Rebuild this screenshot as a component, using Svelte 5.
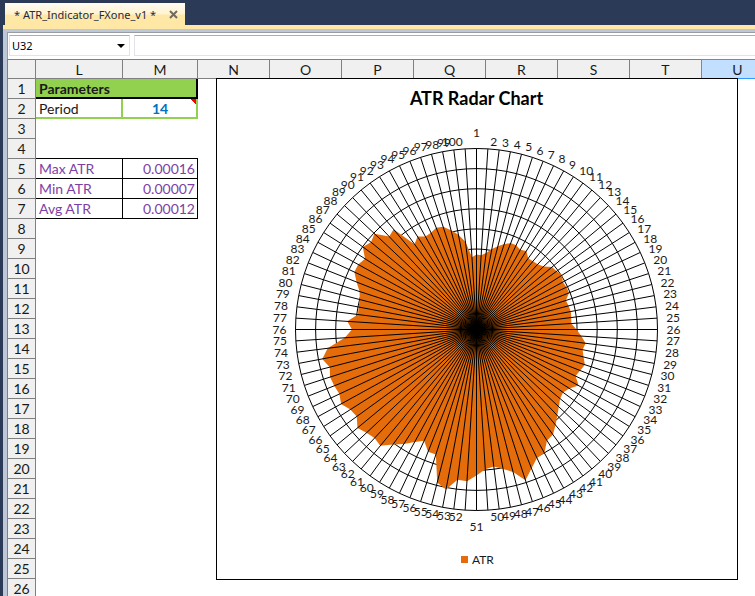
<script>
  const cols = ['L', 'M', 'N', 'O', 'P', 'Q', 'R', 'S', 'T', 'U'];
  const rowCount = 26;

  const cells = {
    1: [{ text: 'Parameters', span: 2, cls: 'title' }],
    2: [{ text: 'Period', cls: 'green' }, { text: '14', cls: 'green value note' }],
    4: [{ text: '', cls: 'above' }, { text: '', cls: 'above' }],
    5: [{ text: 'Max ATR', cls: 'stat' }, { text: '0.00016', cls: 'stat num' }],
    6: [{ text: 'Min ATR', cls: 'stat' }, { text: '0.00007', cls: 'stat num' }],
    7: [{ text: 'Avg ATR', cls: 'stat' }, { text: '0.00012', cls: 'stat num' }]
  };

  const rows = Array.from({ length: rowCount }, (_, i) => ({
    n: i + 1,
    cells: cells[i + 1] ?? [{ text: '' }, { text: '' }]
  }));

  let cellName = $state('U32');
  let formula = $state('');

  // radar chart
  const cx = 259.5;
  const cy = 250.5;
  const R = 181;
  const ringCount = 9;

  const atr = [
    75, 74.5, 77, 82, 86, 90, 93, 93, 91, 93,
    88, 88.5, 89.5, 92, 98, 99, 101.5, 98.5, 99.5, 99.5,
    94, 95, 96, 95.5, 95, 100, 105, 110, 108, 110.5,
    114, 111.5, 109.5, 116.5, 110, 107, 108.5, 113, 118, 124,
    130, 131.5, 141, 142, 149.5, 158.5, 147, 142, 138, 140,
    146, 152, 151.5, 163, 158, 131.5, 131.5, 123, 128.5, 135.5,
    142, 151, 149, 151, 154.5, 148, 149.5, 154.5, 151.5, 153,
    154, 151.5, 157, 150, 132, 124.5, 129.5, 119.5, 120, 120.5,
    123, 129, 135, 135, 132, 140.5, 137, 140, 127.5, 130,
    105.5, 110, 106, 107, 109.5, 108, 102.5, 96.5, 88.5, 72.5
  ];

  function point(i, r) {
    const a = (i / atr.length) * Math.PI * 2;
    return [cx + r * Math.sin(a), cy - r * Math.cos(a)];
  }

  function polygon(radius) {
    return atr.map((_, i) => point(i, radius(i)).map((v) => v.toFixed(2)).join(',')).join(' ');
  }

  const rings = Array.from({ length: ringCount }, (_, k) => polygon(() => (R * (k + 1)) / ringCount));
  const area = polygon((i) => atr[i]);
  const spokes = atr.map((_, i) => point(i, R));

  const labels = atr.map((_, i) => {
    if (i === 0) return { x: cx, y: cy - R - 16, anchor: 'middle' };
    if (i === atr.length / 2) return { x: cx, y: cy + R + 16, anchor: 'middle' };
    const [x, y] = point(i, R + 7);
    return i < atr.length / 2 ? { x: x + 2, y, anchor: 'start' } : { x: x - 2, y, anchor: 'end' };
  });
</script>

<div class="window">
  <div class="tabs">
    <div class="tab">
      <span>* ATR_Indicator_FXone_v1 *</span>
      <button type="button" aria-label="Close">
        <svg width="9" height="9" viewBox="0 0 9 9"><path d="M1 1L8 8M8 1L1 8" stroke="#6f6a5f" stroke-width="2" /></svg>
      </button>
    </div>
  </div>

  <div class="frame">
    <div class="formula-bar">
      <div class="name-box">
        <input aria-label="Cell name" bind:value={cellName} />
        <button type="button" aria-label="Cell list">
          <svg width="8" height="4" viewBox="0 0 8 4"><path d="M0 0H8L4 4Z" fill="#000" /></svg>
        </button>
      </div>
      <input class="formula" aria-label="Formula" bind:value={formula} />
    </div>

    <div class="sheet">
      <table>
        <colgroup>
          <col class="c-row" /><col class="c-l" /><col class="c-m" />
          {#each cols.slice(2) as c (c)}<col class="c-std" />{/each}
        </colgroup>
        <thead>
          <tr>
            <th></th>
            {#each cols as c (c)}
              <th class:selected={c === 'U'}>{c}</th>
            {/each}
          </tr>
        </thead>
        <tbody>
          {#each rows as row (row.n)}
            <tr>
              <th>{row.n}</th>
              {#each row.cells as cell}
                <td class={cell.cls} colspan={cell.span ?? 1}>{cell.text}</td>
              {/each}
            </tr>
          {/each}
        </tbody>
      </table>

      <div class="chart">
        <svg width="520" height="500" viewBox="0 0 520 500" role="img" aria-label="ATR Radar Chart">
          <text class="chart-title" x={cx} y="26" text-anchor="middle">ATR Radar Chart</text>
          {#each rings as ring}
            <polygon class="line" points={ring} />
          {/each}
          <polygon points={area} fill="#e46c0a" />
          {#each spokes as [x, y]}
            <line class="line" x1={cx} y1={cy} x2={x} y2={y} />
          {/each}
          {#each labels as label, i}
            <text class="label" x={label.x} y={label.y + 4} text-anchor={label.anchor}>{i + 1}</text>
          {/each}
          <rect x="244" y="477" width="7" height="7" fill="#e46c0a" />
          <text class="label" x="255" y="485">ATR</text>
        </svg>
      </div>
    </div>
  </div>
</div>

<style>
  :global(body) { margin: 0; }
  .window { height: 100vh; overflow: hidden; display: flex; flex-direction: column; background: #2b3a56; padding-left: 3px; box-sizing: border-box; font-family: Lato, sans-serif; color: #1a1a1a; }
  .tabs { display: flex; padding: 3px 2px 0; border-bottom: 4px solid #ffe8a6; flex-shrink: 0; }
  .tab { display: flex; align-items: center; justify-content: space-between; width: 180px; height: 22px; padding: 0 7px 0 9px; box-sizing: border-box; background: linear-gradient(#fffcf3, #fff3cf 50%, #ffe8a6 55%); font: 11px "Noto Sans", sans-serif; color: #1f2a44; white-space: nowrap; }
  button { display: flex; align-items: center; justify-content: center; border: none; background: none; padding: 0; }

  .frame { flex: 1; min-height: 0; display: flex; flex-direction: column; background: #bdc7d6; padding: 3px 0 0 4px; }
  .formula-bar { display: flex; gap: 4px; height: 27px; padding: 2px 0 3px 1px; box-sizing: border-box; background: #fff; border-top: 1px solid #9a9ca4; border-left: 1px solid #9a9ca4; flex-shrink: 0; }
  .name-box { display: flex; width: 121px; box-sizing: border-box; border: 1px solid #e2e3ea; border-top-color: #abadb3; background: #fff; }
  .name-box button { width: 16px; }
  input { min-width: 0; flex: 1; border: none; outline: none; padding: 0 0 0 2px; background: #fff; font: 11px "Noto Sans", sans-serif; color: #000; }
  input.formula { border: 1px solid #e2e3ea; border-top-color: #abadb3; border-right: none; }

  .sheet { position: relative; flex: 1; min-height: 0; overflow: hidden; background: #fff; border-left: 1px solid #808080; }
  table { border-collapse: separate; border-spacing: 0; table-layout: fixed; width: 766px; }
  .c-row { width: 28px; }
  .c-l { width: 87px; }
  .c-m { width: 75px; }
  .c-std { width: 72px; }
  th, td { box-sizing: border-box; height: 20px; padding: 1px 0 0; font-size: 14px; line-height: 18px; overflow: hidden; }
  th { background: #f0f0f0; border-right: 1px solid #808080; border-bottom: 1px solid #808080; font-weight: 400; text-align: center; }
  thead th { padding-top: 2px; border-top: 1px solid #808080; line-height: 16px; }
  th.selected { background: #c2dfff; border-color: #3399ff; box-shadow: -1px 0 #3399ff; }
  td { padding: 1px 2px 0 3px; }
  td.title { padding-top: 2px; background: #92d050; border-right: 2px solid #000; border-bottom: 2px solid #000; font-weight: 700; line-height: 16px; }
  td.green { padding-top: 2px; border-right: 2px solid #92d050; border-bottom: 2px solid #92d050; line-height: 16px; }
  td.value { color: #0070c0; font-weight: 700; text-align: center; }
  td.note { background: linear-gradient(225deg, #f00 4px, transparent 4px); }
  td.above { border-bottom: 1px solid #000; }
  td.stat { color: #7d3fa5; border-right: 1px solid #000; border-bottom: 1px solid #000; }
  td.num { text-align: right; }

  .chart { position: absolute; left: 208px; top: 19px; border: 1px solid #000; background: #fff; line-height: 0; }
  .line { fill: none; stroke: #000; stroke-width: 1; }
  .label { font-size: 12px; fill: #1a1a1a; }
  .chart-title { font-size: 18px; font-weight: 700; fill: #000; }
</style>
